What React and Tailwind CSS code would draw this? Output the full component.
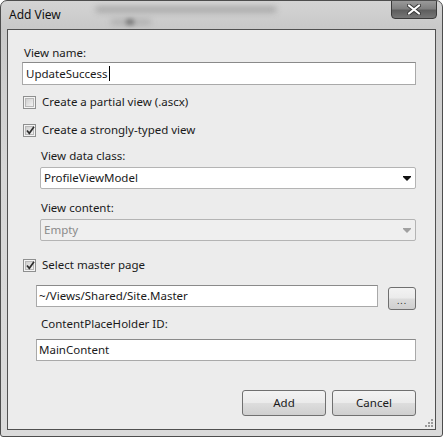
function Check({ checked }) {
  return (
    <span className="w-[13px] h-[13px] border border-[#8e8f8f] bg-[#f4f4f4] flex items-center justify-center shrink-0">
      <span className="w-[9px] h-[9px] border border-[#b8b8b8] bg-[linear-gradient(135deg,#cfcfcf,#f2f2f2)] relative">
        {checked && (
          <svg className="absolute -left-[1px] -top-[2px]" width="11" height="11" viewBox="0 0 11 11">
            <path d="M2 5.5 L4.3 8.3 L9 1.8" fill="none" stroke="#2e2e2e" strokeWidth="1.7" />
          </svg>
        )}
      </span>
    </span>
  );
}

function Arrow({ color }) {
  return (
    <svg width="8" height="5" viewBox="0 0 8 5" className="mr-[4px]">
      <rect x="0" y="0" width="8" height="1" fill={color} />
      <polygon points="0,1 8,1 4,5" fill={color} />
    </svg>
  );
}

export default function App() {
  return (
    <div className="w-[443px] h-[437px] font-['Noto_Sans',sans-serif] text-[11.5px] leading-[16px] text-[#1a1a1a] bg-white">
      <div className="relative w-[443px] h-[437px] rounded-t-[7px] rounded-b-[3px] border border-[#4d4d4d] bg-[linear-gradient(180deg,#d4d4d4_0%,#c9c9c9_6%,#d6d6d6_40%,#dadada_100%)] flex flex-col overflow-hidden">
        {/* blurred background behind glass */}
        <div className="absolute left-[95px] top-[6px] w-[180px] h-[5px] bg-[#8a8a8a] blur-[3px] opacity-70 pointer-events-none" />
        <div className="absolute left-[110px] top-[19px] w-[40px] h-[4px] bg-[#8a8a8a] blur-[3px] opacity-60 pointer-events-none" />
        <div className="absolute left-[125px] top-[18px] w-[8px] h-[6px] bg-[#555] blur-[2px] opacity-60 pointer-events-none" />
        {/* title bar */}
        <div className="relative h-[28px] shrink-0 flex items-center pl-[8px] pb-[1px]">
          <span className="text-[12px] text-[#111]">Add View</span>
          <div className="absolute top-[-1px] right-[5px] w-[46px] h-[19px] rounded-b-[4px] border border-[#3a3a3a] bg-[linear-gradient(180deg,#9a9a9a_0%,#808080_45%,#5e5e5e_55%,#767676_100%)] flex items-center justify-center">
            <svg width="14" height="11" viewBox="0 0 14 11">
              <path d="M2 1.5 L12 9.5 M12 1.5 L2 9.5" stroke="#3a3a3a" strokeWidth="4" strokeLinecap="round" />
              <path d="M2 1.5 L12 9.5 M12 1.5 L2 9.5" stroke="#ffffff" strokeWidth="2.2" strokeLinecap="round" />
            </svg>
          </div>
        </div>
        {/* client area */}
        <div className="relative mx-[6px] mb-[6px] flex-1 border border-[#505050] bg-[#ececec] pl-[14px] pr-[19px]">
          <div className="mt-[15px] pl-[2px] h-[16px]">View name:</div>
          <div className="mt-[1px] h-[23px] border border-[#a9a9a9] border-t-[#8a8a8a] bg-white flex items-center pl-[3px]">
            UpdateSuccess<span className="w-[1px] h-[15px] bg-black ml-[1px]" />
          </div>
          <div className="mt-[9px] h-[16px] flex items-center gap-[6px] pl-[1px]">
            <Check />
            <span>Create a partial view (.ascx)</span>
          </div>
          <div className="mt-[12px] h-[16px] flex items-center gap-[6px] pl-[1px]">
            <Check checked />
            <span>Create a strongly-typed view</span>
          </div>
          <div className="pl-[18px]">
            <div className="mt-[10px] h-[16px] pl-[1px]">View data class:</div>
            <div className="mt-[3px] h-[22px] border border-[#b4b4b4] rounded-[2px] bg-white flex items-center justify-between pl-[3px]">
              <span>ProfileViewModel</span>
              <Arrow color="#111" />
            </div>
            <div className="mt-[11px] h-[16px] pl-[1px]">View content:</div>
            <div className="mt-[3px] h-[22px] border border-[#b4b4b4] rounded-[2px] bg-[#efefef] flex items-center justify-between pl-[3px] text-[#8a8a8a]">
              <span>Empty</span>
              <Arrow color="#a0a0a0" />
            </div>
          </div>
          <div className="mt-[16px] h-[16px] flex items-center gap-[6px] pl-[1px]">
            <Check checked />
            <span>Select master page</span>
          </div>
          <div className="pl-[14px]">
            <div className="mt-[12px] flex items-start">
              <div className="flex-1 h-[22px] border border-[#a9a9a9] border-t-[#8a8a8a] bg-white flex items-center pl-[2px]">
                ~/Views/Shared/Site.Master
              </div>
              <div className="ml-[10px] mt-[2px] w-[28px] h-[23px] rounded-[3px] border border-[#6f6f6f] bg-[linear-gradient(180deg,#f3f3f3_0%,#ebebeb_48%,#dcdcdc_52%,#cfcfcf_100%)] flex items-end justify-center pb-[4px]">
                <span className="text-[9px] leading-[9px] tracking-[1px]">...</span>
              </div>
            </div>
            <div className="mt-[6px] h-[16px] pl-[5px]">ContentPlaceHolder ID:</div>
            <div className="mt-[7px] h-[22px] border border-[#a9a9a9] border-t-[#8a8a8a] bg-white flex items-center pl-[2px]">
              MainContent
            </div>
          </div>
          <div className="mt-[29px] flex justify-end gap-[6px]">
            <div className="w-[84px] h-[26px] rounded-[3px] border border-[#707070] bg-[linear-gradient(180deg,#f3f3f3_0%,#ebebeb_48%,#dddddd_52%,#cfcfcf_100%)] flex items-center justify-center">
              Add
            </div>
            <div className="w-[84px] h-[26px] rounded-[3px] border border-[#707070] bg-[linear-gradient(180deg,#f3f3f3_0%,#ebebeb_48%,#dddddd_52%,#cfcfcf_100%)] flex items-center justify-center">
              Cancel
            </div>
          </div>
          {/* resize grip */}
          <svg className="absolute right-[2px] bottom-[2px]" width="10" height="10" viewBox="0 0 10 10">
            {[[8, 2], [8, 5], [8, 8], [5, 5], [5, 8], [2, 8]].map(([x, y], i) => (
              <rect key={i} x={x} y={y} width="2" height="2" fill="#9a9a9a" />
            ))}
          </svg>
        </div>
      </div>
    </div>
  );
}
